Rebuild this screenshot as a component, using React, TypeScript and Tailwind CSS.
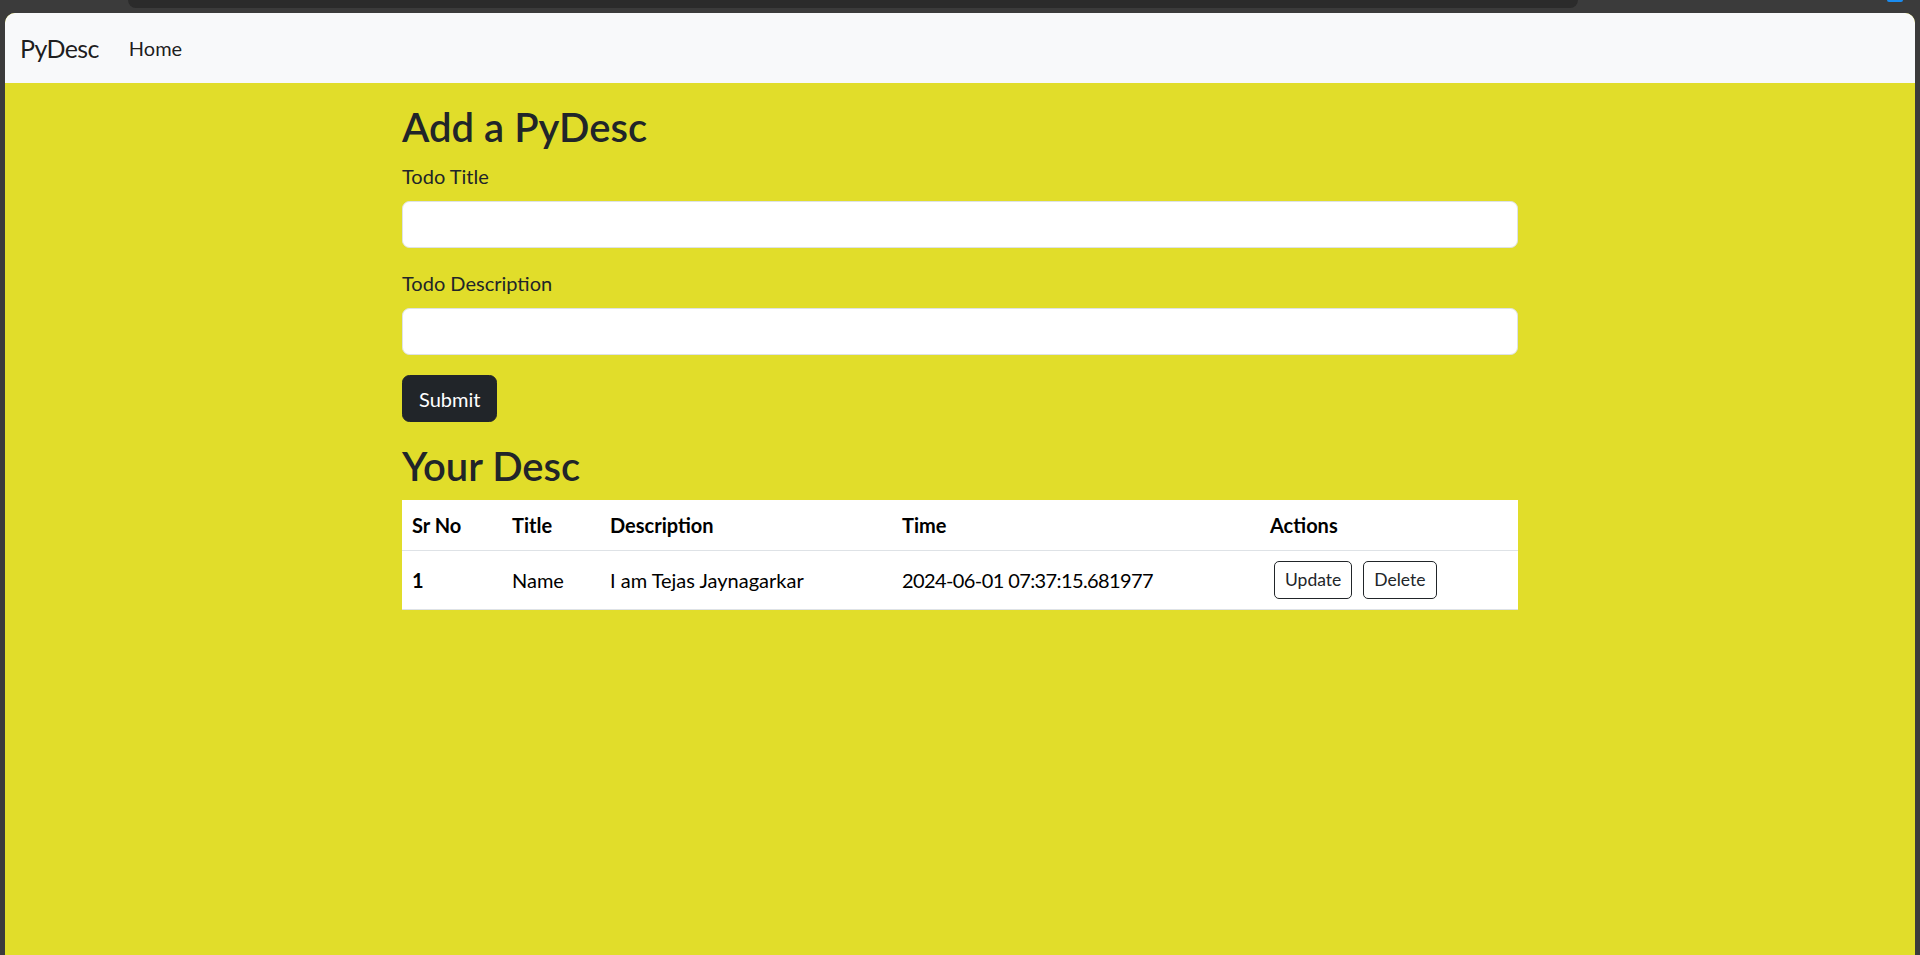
import React from "react";

const font = { fontFamily: 'Lato, "Liberation Sans", Arial, sans-serif' };

export default function App() {
  return (
    <div
      className="w-full h-[955px] bg-[#3b3b3b] flex flex-col overflow-hidden"
      style={font}
    >
      {/* browser chrome strip */}
      <div className="h-[13px] flex items-start shrink-0">
        <div className="ml-[128px] w-[1450px] h-[8px] bg-[#2b2b2b] rounded-b-[8px]" />
        <div className="ml-[309px] w-[16px] h-[2px] bg-[#1a8cf0] rounded-b-[2px]" />
      </div>

      {/* page */}
      <div className="mx-[5px] flex-1 bg-[#e1dd2a] rounded-t-[10px] overflow-hidden flex flex-col">
        <nav className="h-[70px] bg-[#f8f9fa] flex items-center px-[15px] shrink-0">
          <span className="text-[25px] leading-[37px] text-black/90 mr-[20px] tracking-[-0.6px]">PyDesc</span>
          <span className="text-[20px] leading-[30px] px-[10px] text-black/90">Home</span>
        </nav>

        <div className="w-[1116px] mx-auto mt-[20px] text-[#212529]">
          <h2 className="text-[40px] leading-[48px] font-semibold mb-[10px]">Add a PyDesc</h2>
          <div className="mb-[20px]">
            <label className="block text-[20px] leading-[30px] mb-[10px]">Todo Title</label>
            <div className="h-[47px] bg-white border border-[#dee2e6] rounded-[7.5px]" />
          </div>
          <div className="mb-[20px]">
            <label className="block text-[20px] leading-[30px] mb-[10px]">Todo Description</label>
            <div className="h-[47px] bg-white border border-[#dee2e6] rounded-[7.5px]" />
          </div>
          <button className="h-[47px] px-[16px] bg-[#212529] text-white text-[20px] leading-[30px] rounded-[7.5px] border border-[#212529]">
            Submit
          </button>

          <h2 className="text-[40px] leading-[48px] font-semibold mt-[20px] mb-[10px]">Your Desc</h2>
          <table className="w-full bg-white text-black text-[20px] leading-[30px] border-collapse table-fixed">
            <colgroup>
              <col className="w-[100px]" />
              <col className="w-[98px]" />
              <col className="w-[292px]" />
              <col className="w-[368px]" />
              <col className="w-[258px]" />
            </colgroup>
            <thead>
              <tr className="border-b border-[#dee2e6]">
                <th className="text-left font-bold p-[10px]">Sr No</th>
                <th className="text-left font-bold p-[10px]">Title</th>
                <th className="text-left font-bold p-[10px]">Description</th>
                <th className="text-left font-bold p-[10px]">Time</th>
                <th className="text-left font-bold p-[10px]">Actions</th>
              </tr>
            </thead>
            <tbody>
              <tr className="border-b border-[#dee2e6]">
                <th className="text-left font-bold p-[10px] align-middle">1</th>
                <td className="p-[10px] align-middle">Name</td>
                <td className="p-[10px] align-middle">I am Tejas Jaynagarkar</td>
                <td className="p-[10px] align-middle tracking-[-0.6px]">2024-06-01 07:37:15.681977</td>
                <td className="p-[10px] align-middle">
                  <div className="flex gap-[11px] ml-[4px]">
                    <button className="h-[38px] px-[10px] border border-[#212529] text-[#212529] rounded-[5px] text-[17.5px] leading-[26px]">
                      Update
                    </button>
                    <button className="h-[38px] px-[10px] border border-[#212529] text-[#212529] rounded-[5px] text-[17.5px] leading-[26px]">
                      Delete
                    </button>
                  </div>
                </td>
              </tr>
            </tbody>
          </table>
        </div>
      </div>
    </div>
  );
}
